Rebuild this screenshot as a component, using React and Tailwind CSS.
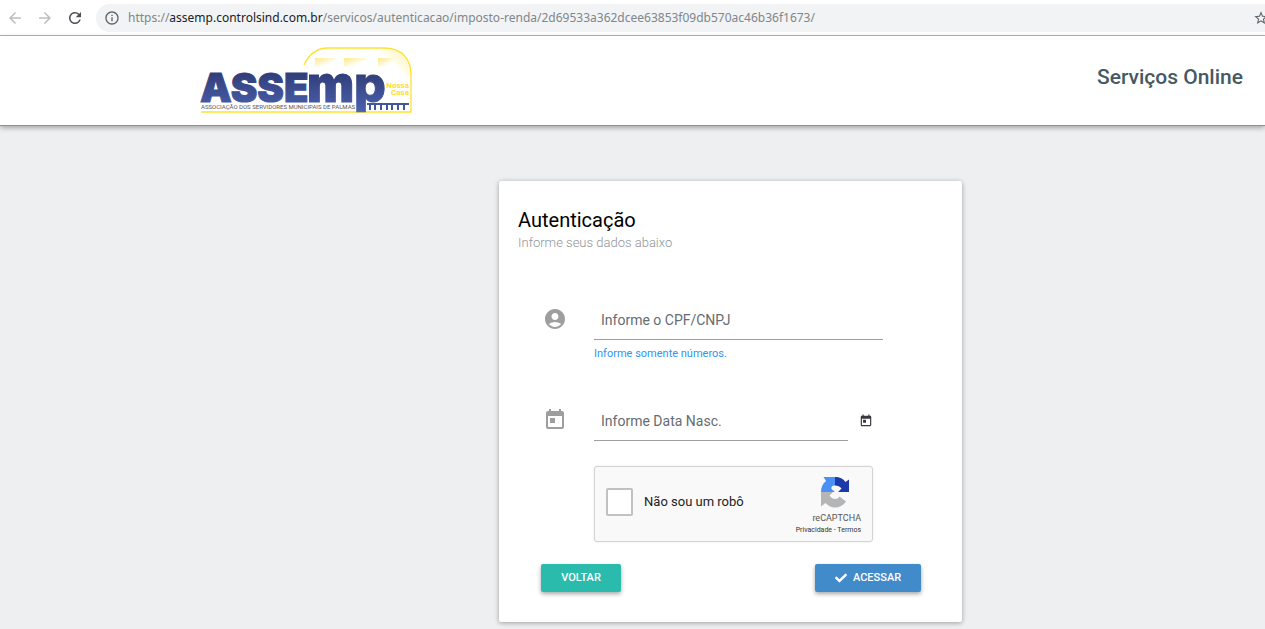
import React from "react";
import { MdAccountCircle, MdArrowBack, MdArrowForward, MdRefresh, MdInfoOutline, MdStarBorder, MdToday } from "react-icons/md";
import { FaCheck } from "react-icons/fa";

function BrowserBar() {
  return (
    <div className="flex h-9 items-center border-b border-[#b4b4b4] bg-white pl-1.5 text-[#5f6368]">
      <button type="button" aria-label="Voltar página" className="mr-3 text-[#bdbdbd]">
        <MdArrowBack size={18} />
      </button>
      <button type="button" aria-label="Avançar página" className="mr-3 text-[#bdbdbd]">
        <MdArrowForward size={18} />
      </button>
      <button type="button" aria-label="Recarregar" className="mr-3 text-[#4d5156]">
        <MdRefresh size={18} />
      </button>
      <div className="flex h-7 min-w-0 flex-1 items-center rounded-l-full bg-[#f1f3f4] pl-2">
        <MdInfoOutline size={16} className="mr-2 shrink-0" />
        <span className="font-['Noto_Sans',sans-serif] text-[12px] whitespace-nowrap text-[#80868b]">
          https://<span className="text-[#202124]">assemp.controlsind.com.br</span>
          /servicos/autenticacao/imposto-renda/2d69533a362dcee63853f09db570ac46b36f1673/
        </span>
        <button type="button" aria-label="Adicionar aos favoritos" className="-mr-1 ml-auto shrink-0">
          <MdStarBorder size={16} />
        </button>
      </div>
    </div>
  );
}

function Logo() {
  return (
    <svg width="214" height="68" viewBox="0 0 214 68" role="img" aria-label="ASSEMP Nossa Casa" className="overflow-visible">
      <defs>
        <linearGradient id="blue" x1="0" y1="28" x2="0" y2="64" gradientUnits="userSpaceOnUse">
          <stop offset="0" stopColor="#333f7c" />
          <stop offset="1" stopColor="#4a61ad" />
        </linearGradient>
        <linearGradient id="win" x1="0" y1="0" x2="1" y2="1">
          <stop offset="0" stopColor="#ffe98a" />
          <stop offset="0.6" stopColor="#fffdf0" />
        </linearGradient>
        <linearGradient id="arch" x1="0" y1="1" x2="1" y2="0">
          <stop offset="0.6" stopColor="#ffffff" />
          <stop offset="1" stopColor="#fff3a8" />
        </linearGradient>
      </defs>
      <path d="M165 2H184C202 2 210 13 210 28V45C206 26 196 8 165 2Z" fill="url(#arch)" />
      <path d="M104 18C110 5 118 1 128 1H184C202 1 211 12 211 28V65H1" fill="none" stroke="#ffe22e" strokeWidth="1.3" />
      <path d="M115 11H137C132 14 130 19 115 20Z" fill="url(#win)" />
      <path d="M144 11H167C162 14 160 19 144 20Z" fill="url(#win)" />
      <path d="M178 11H196C193 14 192 19 178 20Z" fill="url(#win)" />
      <g fill="url(#blue)" stroke="url(#blue)" strokeWidth="1" fontFamily="Inter, sans-serif" fontWeight="900">
        <text x="0" y="55" fontSize="40">ASSE</text>
        <text x="107" y="55" fontSize="50">m</text>
        <text x="154" y="55" fontSize="50" fontWeight="800">p</text>
      </g>
      <text x="1" y="62" fontFamily="Roboto, sans-serif" fontSize="6" fill="#55565c">
        ASSOCIAÇÃO DOS SERVIDORES MUNICIPAIS DE PALMAS
      </text>
      <g fontFamily="Roboto, sans-serif" fontWeight="700" fontSize="8" fill="#ffe01c" textAnchor="end">
        <text x="209" y="41">Nossa</text>
        <text x="209" y="48">Casa</text>
      </g>
      <g fill="#42559f">
        <path d="M167 56H209V58H167Z" />
        <path d="M169 57h2v6h-2zM174 57h2v6h-2zM180 57h2v6h-2zM186 57h2v6h-2zM191 57h2v6h-2zM197 57h2v6h-2zM203 57h2v6h-2z" />
      </g>
    </svg>
  );
}

function RecaptchaMark() {
  return (
    <svg width="30" height="32" viewBox="0 0 30 32" aria-hidden="true">
      <path d="M15 1V9.500C12.500 9 11 10.500 11.500 13L15 16H1C1 11.500 2.500 8 6 5L3.500 1Z" fill="#4a90f5" />
      <path d="M15 1C20 1 23 2.500 25.500 6L29 3.500V16H18L21.500 12.500C20 10.500 18 9.500 15 9.500Z" fill="#1c3aa9" />
      <path d="M1 16H13L9.500 19.500C11 22 13 23 15.500 23C17.500 23 18.500 22 19.500 20.500L26 25.500C23 29.500 19.500 31.500 15 31.500C11 31.500 8 29.500 5.500 27L1 30.500Z" fill="#b3b5b6" />
    </svg>
  );
}

const inputStyle =
  "block h-[41px] w-full border-b border-[#9e9e9e] bg-transparent px-[7px] pt-px text-[14px] text-[#555] outline-none placeholder:text-[#666c72] placeholder:opacity-100";

export default function App() {
  return (
    <div className="flex min-h-screen flex-col bg-[#edeff1] font-[Roboto,sans-serif]">
      <BrowserBar />
      <header className="relative flex h-[90px] items-center justify-between border-b border-[#84959d] bg-white pr-[22px] pl-[200px] shadow-[0_2px_5px_rgba(0,0,0,0.3)]">
        <Logo />
        <h1 className="pb-1.5 text-[21px] font-medium text-[#455a64]">Serviços Online</h1>
      </header>
      <main className="flex-1 pt-[55px] pb-[7px] pl-[39.45%]">
        <form
          onSubmit={(e) => e.preventDefault()}
          className="w-[463px] rounded-xs bg-white pt-6 pr-[41px] pb-[30px] pl-[42px] shadow-[0_1px_5px_rgba(0,0,0,0.35)]"
        >
          <div className="-ml-[23px]">
            <h2 className="text-[20px] leading-[30px] text-black">Autenticação</h2>
            <p className="text-[13px] leading-4 font-light text-[#8f9499]">Informe seus dados abaixo</p>
          </div>

          <div className="mt-12 flex">
            <label htmlFor="cpf" aria-label="CPF ou CNPJ" className="w-[53px] pt-2 pl-0.5 text-[#9e9e9e]">
              <MdAccountCircle size={24} />
            </label>
            <div className="mr-[38px] flex-1">
              <input id="cpf" type="text" placeholder="Informe o CPF/CNPJ" className={inputStyle} />
              <p className="pt-1.5 text-[11px] leading-4 text-[#2f93f5]">Informe somente números.</p>
            </div>
          </div>

          <div className="mt-[38px] flex">
            <label htmlFor="nasc" aria-label="Data de nascimento" className="w-[53px] pt-2 pl-0.5 text-[#9e9e9e]">
              <MdToday size={24} />
            </label>
            <div className="flex-1">
              <input id="nasc" type="text" placeholder="Informe Data Nasc." className={inputStyle} />
            </div>
            <button type="button" aria-label="Abrir calendário" className="mr-12 ml-[11px] text-[#37393f]">
              <MdToday size={14} />
            </button>
          </div>

          <div className="mt-[25px] ml-[53px] flex h-[76px] w-[279px] items-center rounded-[3px] border border-[#d3d3d3] bg-[#f9f9f9] pr-[11px] pb-1 pl-[11px] shadow-[0_0_3px_rgba(0,0,0,0.08)]">
            <input
              id="robo"
              type="checkbox"
              className="h-7 w-[27px] appearance-none rounded-xs border-2 border-[#c1c1c1] bg-white"
            />
            <label htmlFor="robo" className="ml-[11px] text-[13px] text-[#222]">
              Não sou um robô
            </label>
            <div className="ml-auto flex flex-col items-end pt-2">
              <div className="mr-[11px]">
                <RecaptchaMark />
              </div>
              <span className="pt-1 text-[9px] leading-3 text-[#555]">reCAPTCHA</span>
              <span className="text-[7px] leading-3 text-[#333]">
                <a href="#privacidade">Privacidade</a> - <a href="#termos">Termos</a>
              </span>
            </div>
          </div>

          <div className="mt-[22px] flex justify-between text-[11px] font-medium text-white">
            <button type="button" className="h-7 w-20 rounded-xs bg-[#2bbbad] shadow-[0_2px_4px_rgba(0,0,0,0.35)]">
              VOLTAR
            </button>
            <button
              type="submit"
              className="flex h-7 w-[106px] items-center justify-center gap-1.5 rounded-xs bg-[#428bca] shadow-[0_2px_4px_rgba(0,0,0,0.35)]"
            >
              <FaCheck size={12} />
              ACESSAR
            </button>
          </div>
        </form>
      </main>
    </div>
  );
}
